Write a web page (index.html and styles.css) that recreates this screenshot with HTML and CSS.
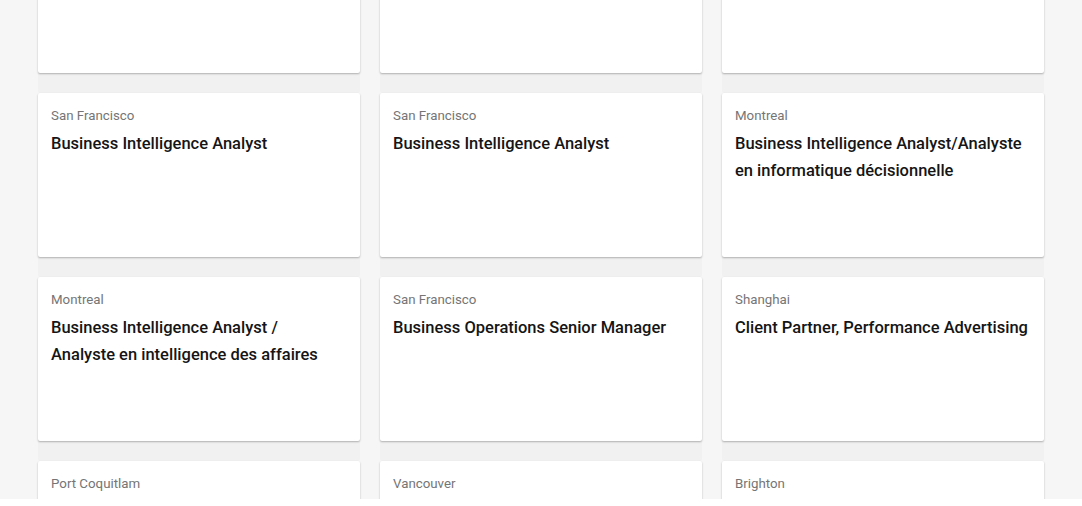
FILE: index.html
```html
<!DOCTYPE html>
<html lang="en">
<head>
<meta charset="utf-8">
<title>Jobs</title>
<link rel="stylesheet" href="styles.css">
</head>
<body>
<div class="viewport">
  <main class="jobs">
    <article class="card"><div class="loc">Toronto</div><h3 class="title">Business Intelligence Analyst</h3></article>
    <article class="card"><div class="loc">New York</div><h3 class="title">Business Intelligence Analyst</h3></article>
    <article class="card"><div class="loc">London</div><h3 class="title">Business Intelligence Analyst</h3></article>

    <article class="card"><div class="loc">San Francisco</div><h3 class="title">Business Intelligence Analyst</h3></article>
    <article class="card"><div class="loc">San Francisco</div><h3 class="title">Business Intelligence Analyst</h3></article>
    <article class="card"><div class="loc">Montreal</div><h3 class="title">Business Intelligence Analyst/Analyste en informatique décisionnelle</h3></article>

    <article class="card"><div class="loc">Montreal</div><h3 class="title">Business Intelligence Analyst / Analyste en intelligence des affaires</h3></article>
    <article class="card"><div class="loc">San Francisco</div><h3 class="title">Business Operations Senior Manager</h3></article>
    <article class="card"><div class="loc">Shanghai</div><h3 class="title">Client Partner, Performance Advertising</h3></article>

    <article class="card"><div class="loc">Port Coquitlam</div><h3 class="title">Client Success Manager</h3></article>
    <article class="card"><div class="loc">Vancouver</div><h3 class="title">Client Success Manager</h3></article>
    <article class="card"><div class="loc">Brighton</div><h3 class="title">Client Success Manager</h3></article>
  </main>
</div>
</body>
</html>
```
FILE: styles.css
```css
html, body {
  margin: 0;
  padding: 0;
  background: #ffffff;
}

.viewport {
  height: 499px;
  overflow: hidden;
  background: #f6f6f6;
  font-family: Roboto, "Liberation Sans", Arial, sans-serif;
}

.jobs {
  display: grid;
  grid-template-columns: repeat(3, 322px);
  grid-auto-rows: 164px;
  gap: 20px;
  padding: 0 38px;
  margin-top: -91px;
}

.card {
  background: #ffffff;
  border-radius: 2px;
  padding: 14px 15px 13px 13px;
  box-shadow: 0 1px 2px rgba(0, 0, 0, 0.28), 0 20px 0 rgba(0, 0, 0, 0.02);
  box-sizing: border-box;
}

.loc {
  font-size: 13.3px;
  line-height: 18px;
  color: #757575;
}

.title {
  margin: 6px 0 0;
  font-size: 16.5px;
  line-height: 26.5px;
  font-weight: 500;
  color: #151515;
}
```
